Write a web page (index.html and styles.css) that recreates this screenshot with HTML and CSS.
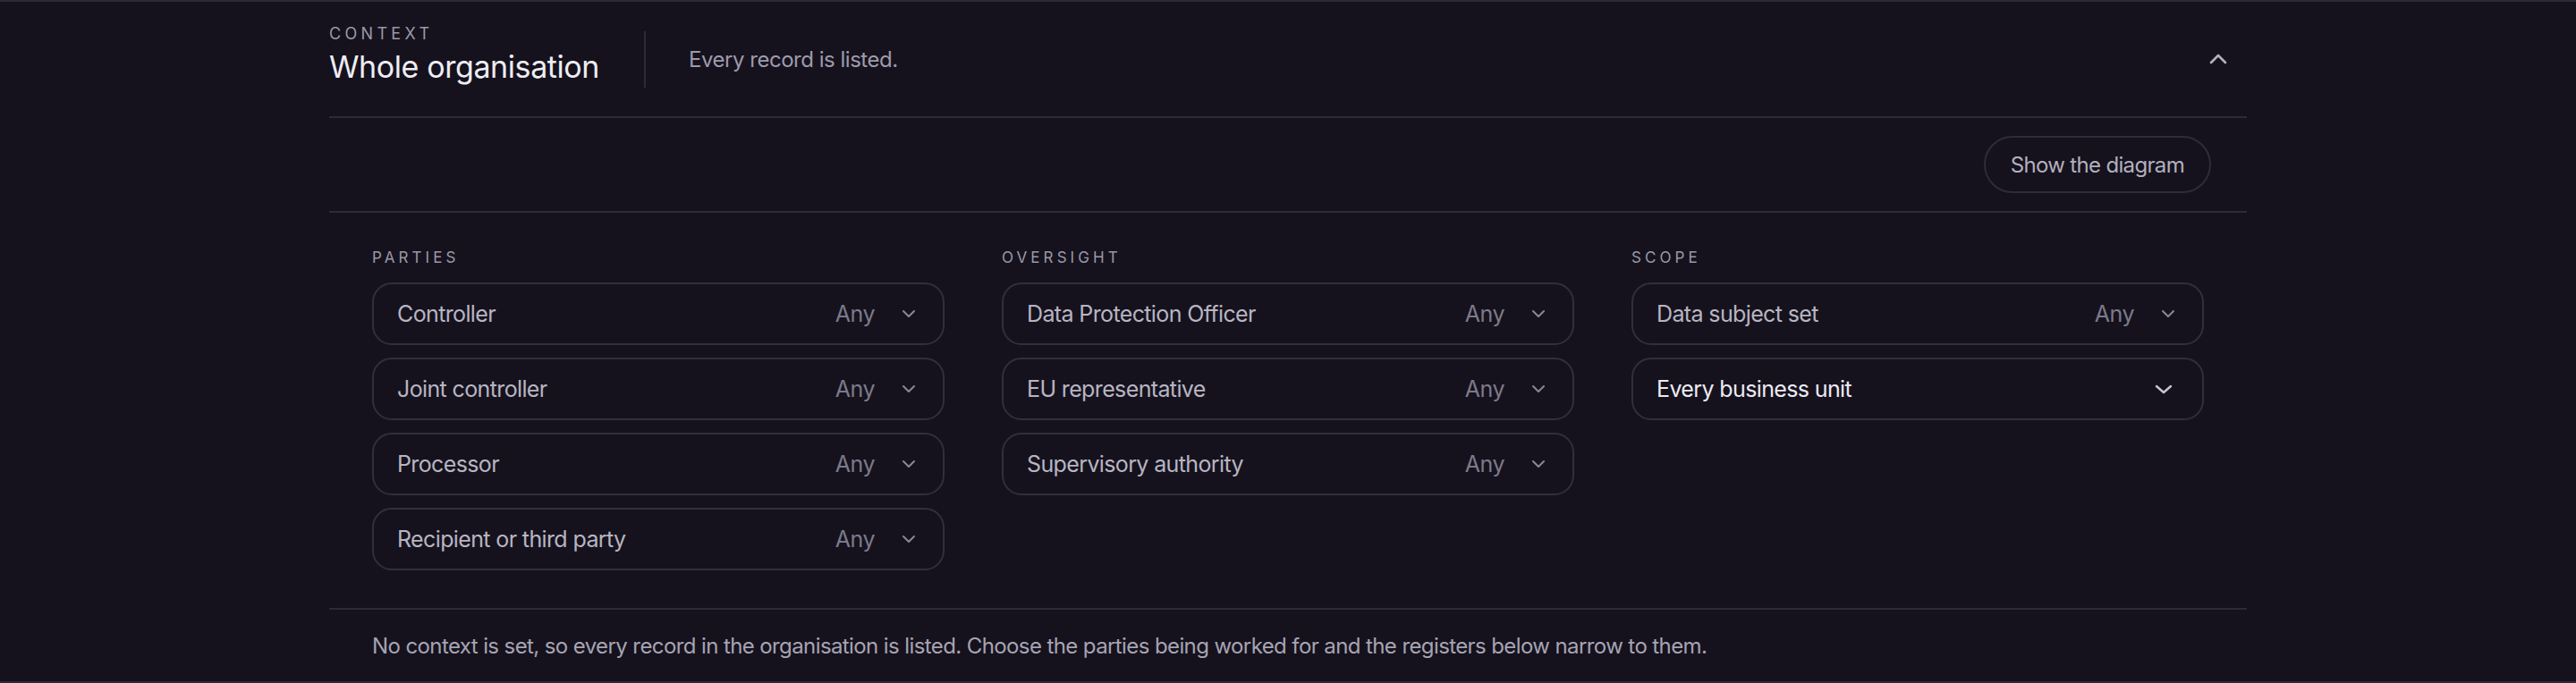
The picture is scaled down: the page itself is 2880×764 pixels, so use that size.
FILE: index.html
```html
<!DOCTYPE html>
<html lang="en">
<head>
<meta charset="utf-8">
<title>Context</title>
<link rel="stylesheet" href="styles.css">
</head>
<body>
<div class="page">
  <div class="panel">
    <header class="head">
      <div class="title-block">
        <div class="eyebrow">Context</div>
        <div class="title">Whole organisation</div>
      </div>
      <div class="divider"></div>
      <p class="summary">Every record is listed.</p>
      <button class="collapse" aria-label="Collapse">
        <svg width="20" height="12" viewBox="0 0 20 12"><path d="M2 10 L10 2 L18 10" fill="none" stroke="currentColor" stroke-width="2.6" stroke-linecap="round" stroke-linejoin="round"/></svg>
      </button>
    </header>

    <div class="toolbar">
      <button class="pill">Show the diagram</button>
    </div>

    <div class="filters">
      <section class="group">
        <h3 class="group-label">Parties</h3>
        <div class="select"><span class="sel-label">Controller</span><span class="sel-value">Any</span><svg class="chev" width="16" height="10" viewBox="0 0 16 10"><path d="M2 2 L8 8 L14 2" fill="none" stroke="currentColor" stroke-width="2" stroke-linecap="round" stroke-linejoin="round"/></svg></div>
        <div class="select"><span class="sel-label">Joint controller</span><span class="sel-value">Any</span><svg class="chev" width="16" height="10" viewBox="0 0 16 10"><path d="M2 2 L8 8 L14 2" fill="none" stroke="currentColor" stroke-width="2" stroke-linecap="round" stroke-linejoin="round"/></svg></div>
        <div class="select"><span class="sel-label">Processor</span><span class="sel-value">Any</span><svg class="chev" width="16" height="10" viewBox="0 0 16 10"><path d="M2 2 L8 8 L14 2" fill="none" stroke="currentColor" stroke-width="2" stroke-linecap="round" stroke-linejoin="round"/></svg></div>
        <div class="select"><span class="sel-label">Recipient or third party</span><span class="sel-value">Any</span><svg class="chev" width="16" height="10" viewBox="0 0 16 10"><path d="M2 2 L8 8 L14 2" fill="none" stroke="currentColor" stroke-width="2" stroke-linecap="round" stroke-linejoin="round"/></svg></div>
      </section>
      <section class="group">
        <h3 class="group-label">Oversight</h3>
        <div class="select"><span class="sel-label">Data Protection Officer</span><span class="sel-value">Any</span><svg class="chev" width="16" height="10" viewBox="0 0 16 10"><path d="M2 2 L8 8 L14 2" fill="none" stroke="currentColor" stroke-width="2" stroke-linecap="round" stroke-linejoin="round"/></svg></div>
        <div class="select"><span class="sel-label">EU representative</span><span class="sel-value">Any</span><svg class="chev" width="16" height="10" viewBox="0 0 16 10"><path d="M2 2 L8 8 L14 2" fill="none" stroke="currentColor" stroke-width="2" stroke-linecap="round" stroke-linejoin="round"/></svg></div>
        <div class="select"><span class="sel-label">Supervisory authority</span><span class="sel-value">Any</span><svg class="chev" width="16" height="10" viewBox="0 0 16 10"><path d="M2 2 L8 8 L14 2" fill="none" stroke="currentColor" stroke-width="2" stroke-linecap="round" stroke-linejoin="round"/></svg></div>
      </section>
      <section class="group">
        <h3 class="group-label">Scope</h3>
        <div class="select"><span class="sel-label">Data subject set</span><span class="sel-value">Any</span><svg class="chev" width="16" height="10" viewBox="0 0 16 10"><path d="M2 2 L8 8 L14 2" fill="none" stroke="currentColor" stroke-width="2" stroke-linecap="round" stroke-linejoin="round"/></svg></div>
        <div class="select select-strong"><span class="sel-label">Every business unit</span><svg class="chev chev-strong" width="22" height="13" viewBox="0 0 22 13"><path d="M3 3 L11 10 L19 3" fill="none" stroke="currentColor" stroke-width="2.4" stroke-linecap="round" stroke-linejoin="round"/></svg></div>
      </section>
    </div>

    <p class="note">No context is set, so every record in the organisation is listed. Choose the parties being worked for and the registers below narrow to them.</p>
  </div>
</div>
</body>
</html>
```

FILE: styles.css
```css
* { box-sizing: border-box; }

html, body {
  margin: 0;
  padding: 0;
  background: #15121e;
}

body {
  font-family: Inter, "Liberation Sans", sans-serif;
  color: #ecebf0;
}

.page {
  height: 764px;
  border-top: 2px solid #2c2a38;
  border-bottom: 2px solid #2c2a38;
}

.panel {
  width: 2144px;
  margin: 0 auto;
}

/* header */
.head {
  height: 130px;
  display: flex;
  align-items: center;
  border-bottom: 2px solid #2d2a39;
}

.title-block {
  margin-bottom: 10px;
}

.eyebrow {
  font-size: 18px;
  line-height: 20px;
  letter-spacing: 0.24em;
  text-transform: uppercase;
  color: #9b98a7;
}

.title {
  margin-top: 7px;
  font-size: 34px;
  line-height: 40px;
  letter-spacing: -0.012em;
  color: #eeedf2;
}

.divider {
  width: 2px;
  height: 63px;
  background: #2d2a39;
  margin: 0 48px 0 50px;
}

.summary {
  margin: 0;
  font-size: 24px;
  letter-spacing: -0.02em;
  color: #9e9baa;
}

.collapse {
  margin-left: auto;
  margin-right: 22px;
  padding: 0;
  border: 0;
  background: none;
  color: #b4b1bd;
  display: flex;
}

/* toolbar */
.toolbar {
  height: 106px;
  display: flex;
  align-items: center;
  justify-content: flex-end;
  padding-right: 40px;
  border-bottom: 2px solid #2d2a39;
}

.pill {
  height: 64px;
  padding: 0 28px;
  border: 2px solid #2f2b3b;
  border-radius: 999px;
  background: transparent;
  font-family: Inter, "Liberation Sans", sans-serif;
  font-size: 24px;
  letter-spacing: -0.028em;
  color: #b3b0bc;
}

/* filters */
.filters {
  display: grid;
  grid-template-columns: repeat(3, 1fr);
  gap: 64px;
  align-items: start;
  padding: 40px 48px 42px;
  border-bottom: 2px solid #2d2a39;
  height: 444px;
}

.group {
  display: flex;
  flex-direction: column;
  gap: 14px;
}

.group-label {
  margin: 0 0 4px;
  font-size: 17px;
  line-height: 20px;
  font-weight: 400;
  letter-spacing: 0.24em;
  text-transform: uppercase;
  color: #9b98a7;
}

.select {
  height: 70px;
  display: flex;
  align-items: center;
  padding: 0 30px 0 26px;
  border: 2px solid #322e3e;
  border-radius: 22px;
}

.sel-label {
  flex: 1;
  font-size: 25px;
  letter-spacing: -0.025em;
  color: #b8b5c1;
}

.sel-value {
  font-size: 25px;
  letter-spacing: -0.02em;
  color: #7d7a89;
  margin-right: 30px;
}

.chev {
  color: #8a8796;
  display: block;
}

.select-strong .sel-label {
  color: #eceaf1;
}

.chev-strong {
  color: #c9c6d1;
  margin-right: 2px;
}

/* footer note */
.note {
  margin: 0;
  height: 80px;
  display: flex;
  align-items: center;
  padding: 0 48px;
  font-size: 24px;
  letter-spacing: -0.025em;
  color: #a7a4b2;
}
```
